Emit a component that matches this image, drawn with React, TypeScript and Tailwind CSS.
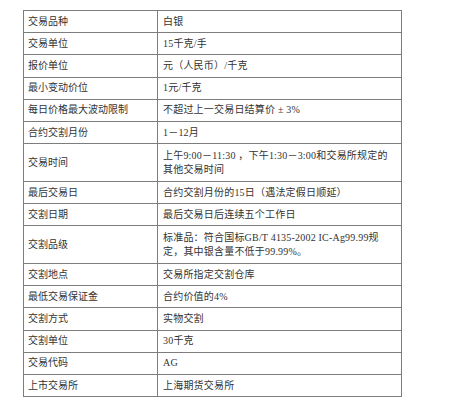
const rows: { label: string; value: React.ReactNode; tall?: boolean }[] = [
  { label: "交易品种", value: "白银" },
  { label: "交易单位", value: "15千克/手" },
  { label: "报价单位", value: "元（人民币）/千克" },
  { label: "最小变动价位", value: "1元/千克" },
  { label: "每日价格最大波动限制", value: "不超过上一交易日结算价 ± 3%" },
  { label: "合约交割月份", value: "1－12月" },
  {
    label: "交易时间",
    value: (
      <>
        上午9:00－11:30 ，下午1:30－3:00和交易所规定的
        <br />
        其他交易时间
      </>
    ),
    tall: true,
  },
  { label: "最后交易日", value: "合约交割月份的15日（遇法定假日顺延）" },
  { label: "交割日期", value: "最后交易日后连续五个工作日" },
  {
    label: "交割品级",
    value: (
      <>
        标准品：符合国标GB/T 4135-2002 IC-Ag99.99规
        <br />
        定，其中银含量不低于99.99%。
      </>
    ),
    tall: true,
  },
  { label: "交割地点", value: "交易所指定交割仓库" },
  { label: "最低交易保证金", value: "合约价值的4%" },
  { label: "交割方式", value: "实物交割" },
  { label: "交割单位", value: "30千克" },
  { label: "交易代码", value: "AG" },
  { label: "上市交易所", value: "上海期货交易所" },
];

export default function App() {
  return (
    <div
      className="w-[465px] h-[400px] bg-white pl-[23px] pt-[10px]"
      style={{ fontFamily: '"Liberation Serif", "Noto Sans CJK SC", serif' }}
    >
      <table className="w-[379px] border-collapse text-[10px] leading-[14px] text-[#333]">
        <tbody>
          {rows.map((r) => (
            <tr key={r.label} className={r.tall ? "h-[37.8px]" : "h-[22.2px]"}>
              <td className="w-[134px] border border-[#7d7d7d] px-[4px] align-middle">
                {r.label}
              </td>
              <td className="border border-[#7d7d7d] px-[5px] align-middle whitespace-nowrap tracking-[0.2px]">
                {r.value}
              </td>
            </tr>
          ))}
        </tbody>
      </table>
    </div>
  );
}
